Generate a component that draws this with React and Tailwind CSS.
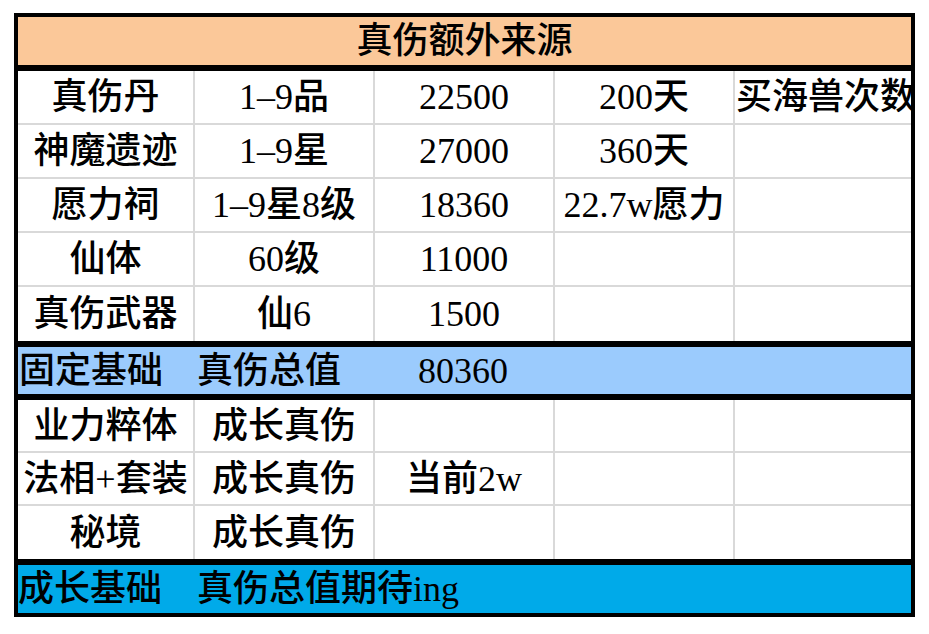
const widths = ["w-[175px]", "w-[180px]", "w-[180px]", "w-[180px]", "w-[178px]"];

const topRows = [
  ["真伤丹", "1–9品", "22500", "200天", "买海兽次数"],
  ["神魔遗迹", "1–9星", "27000", "360天", ""],
  ["愿力祠", "1–9星8级", "18360", "22.7w愿力", ""],
  ["仙体", "60级", "11000", "", ""],
  ["真伤武器", "仙6", "1500", "", ""],
];

const growRows = [
  ["业力粹体", "成长真伤", "", "", ""],
  ["法相+套装", "成长真伤", "当前2w", "", ""],
  ["秘境", "成长真伤", "", "", ""],
];

function Row({ cells, height, last }) {
  return (
    <div className={`flex ${height} ${last ? "" : "border-b-2 border-[#d9d9d9]"}`}>
      {cells.map((c, i) => (
        <div
          key={i}
          className={`${widths[i]} shrink-0 h-full flex items-center overflow-hidden whitespace-nowrap ${
            i > 0 ? "border-l-2 border-[#d9d9d9]" : ""
          } ${i === 4 ? "justify-start pl-[1px]" : "justify-center"}`}
        >
          {c}
        </div>
      ))}
    </div>
  );
}

export default function App() {
  return (
    <div className="w-[929px] h-[634px] bg-white pt-[13px] pl-[14px]">
      <div
        className="w-[901px] border-4 border-black text-[36px] leading-none font-medium text-black"
        style={{ fontFamily: '"Liberation Serif", "Noto Sans CJK SC", serif' }}
      >
        {/* header */}
        <div className="h-[54px] bg-[#fbc899] border-b-[6px] border-black flex items-center justify-center">
          真伤额外来源
        </div>

        {topRows.map((r, i) => (
          <Row key={i} cells={r} height="h-[54px]" last={i === topRows.length - 1} />
        ))}

        {/* fixed base */}
        <div className="h-[59px] bg-[#9bcbfd] border-y-[6px] border-black flex items-center">
          <div className="w-[175px] shrink-0 pl-[1px]">固定基础</div>
          <div className="w-[180px] shrink-0 pl-[4px]">真伤总值</div>
          <div className="w-[180px] shrink-0 flex justify-center">80360</div>
        </div>

        {growRows.map((r, i) => (
          <Row key={i} cells={r} height="h-[53px]" last={i === growRows.length - 1} />
        ))}

        {/* growth base */}
        <div className="h-[54px] bg-[#00aae9] border-t-[6px] border-black flex items-center">
          <div className="w-[175px] shrink-0 whitespace-nowrap">成长基础</div>
          <div className="pl-[4px] whitespace-nowrap">真伤总值期待ing</div>
        </div>
      </div>
    </div>
  );
}
